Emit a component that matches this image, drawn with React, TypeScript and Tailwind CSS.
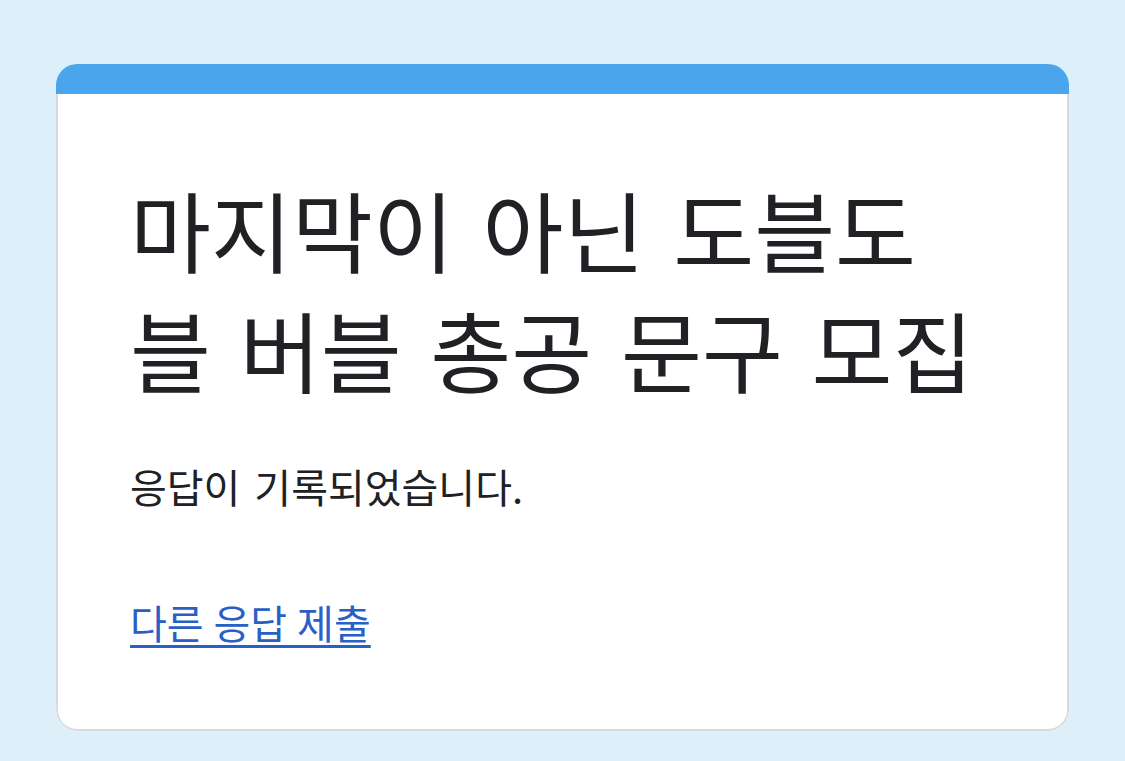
import React from "react";

export default function App() {
  return (
    <div
      className="min-h-[761px] w-full bg-[#ddf0fa] px-[56px] pt-[64px] pb-[29px]"
      style={{ fontFamily: '"Noto Sans CJK KR", "Noto Sans", sans-serif' }}
    >
      <div className="flex w-[1013px] flex-col overflow-hidden rounded-[21px] bg-white">
        <div className="h-[30px] bg-[#4ba5ec]" />
        <div className="flex flex-col rounded-b-[21px] border-x-2 border-b-2 border-[#d7dbe0] pl-[72px] pr-[77px] pt-[74px] pb-[83px]">
          <h1 className="text-[88px] leading-[120px] font-normal text-[#202124] [word-spacing:9px]">
            마지막이 아닌 도블도블 버블 총공 문구 모집
          </h1>
          <p className="mt-[54px] text-[40px] leading-[48px] text-[#202124] [word-spacing:5px]">
            응답이 기록되었습니다.
          </p>
          <a
            href="#"
            className="mt-[88px] self-start text-[40px] leading-[48px] text-[#2a5fc6] underline decoration-[3px] underline-offset-[6px] [word-spacing:1px]"
            style={{ textDecorationSkipInk: "none" }}
          >
            다른 응답 제출
          </a>
        </div>
      </div>
    </div>
  );
}
